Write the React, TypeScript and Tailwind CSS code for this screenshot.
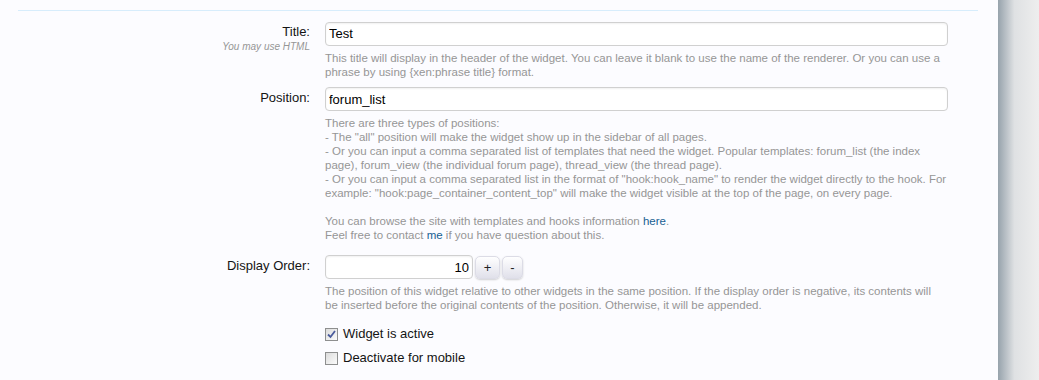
import { useState } from 'react';

const font = { fontFamily: '"Liberation Sans", Arial, sans-serif' };

function Hint({ children, className = '' }: { children: React.ReactNode; className?: string }) {
  return <div className={'text-[11.5px] leading-[14px] text-[#969696] mt-[5px] ' + className}>{children}</div>;
}

function Row({ label, sub, children }: { label: string; sub?: string; children: React.ReactNode }) {
  return (
    <div className="flex">
      <div className="w-[310px] shrink-0 text-right pt-[3px]">
        <div className="text-[13px] leading-[16px] text-[#141414]">{label}</div>
        {sub && <div className="text-[10px] italic text-[#969696] leading-[13px]">{sub}</div>}
      </div>
      <div className="ml-[15px] w-[623px]">{children}</div>
    </div>
  );
}

const inputCls =
  'h-[24px] border border-[#d0d0d0] rounded-[4px] bg-white px-[3px] text-[13px] text-black outline-none shadow-[inset_0_1px_2px_rgba(0,0,0,0.06)]';

const btnCls =
  'h-[23px] rounded-[5px] border border-[#dcdce6] bg-gradient-to-b from-[#ffffff] to-[#e0e0ea] text-[13px] leading-none text-[#222] shadow-[0_1px_2px_rgba(0,0,0,0.18)]';

function Check({ checked, onToggle, label }: { checked: boolean; onToggle: () => void; label: string }) {
  return (
    <label className="flex items-center gap-[5px] cursor-pointer" onClick={onToggle}>
      <span className="flex h-[13px] w-[13px] items-center justify-center border border-[#8e8f8f] bg-gradient-to-br from-[#dcdcdc] to-[#fbfbfb]">
        {checked && (
          <svg width="9" height="9" viewBox="0 0 9 9">
            <path d="M1 4.5 L3.5 7 L8 1" fill="none" stroke="#4a5b9c" strokeWidth="1.8" />
          </svg>
        )}
      </span>
      {label}
    </label>
  );
}

export default function App() {
  const [order, setOrder] = useState(10);
  const [active, setActive] = useState(true);
  const [mobile, setMobile] = useState(false);
  return (
    <div className="flex h-[380px] w-[1039px] overflow-hidden bg-[#eeeeee]" style={font}>
      <div className="w-[998px] bg-[#fcfcff] pt-[10px]">
        <div className="ml-[18px] w-[960px] border-t border-[#d7edfc]" />
        <div className="flex flex-col pt-[10px]">
          <Row label="Title:" sub="You may use HTML">
            <input className={inputCls + ' w-full'} defaultValue="Test" />
            <Hint>
              This title will display in the header of the widget. You can leave it blank to use the name of the renderer. Or you can use a phrase by using {'{xen:phrase title}'} format.
            </Hint>
          </Row>
          <div className="h-[8px]" />
          <Row label="Position:">
            <input className={inputCls + ' w-full'} defaultValue="forum_list" />
            <Hint>
              There are three types of positions:
              <br />- The "all" position will make the widget show up in the sidebar of all pages.
              <br />- Or you can input a comma separated list of templates that need the widget. Popular templates: forum_list (the index page), forum_view (the individual forum page), thread_view (the thread page).
              <br />- Or you can input a comma separated list in the format of "hook:hook_name" to render the widget directly to the hook. For example: "hook:page_container_content_top" will make the widget visible at the top of the page, on every page.
              <br />
              <br />
              You can browse the site with templates and hooks information <a className="text-[#176093]">here</a>.
              <br />
              Feel free to contact <a className="text-[#176093]">me</a> if you have question about this.
            </Hint>
          </Row>
          <div className="h-[13px]" />
          <Row label="Display Order:">
            <div className="flex items-center gap-[2px]">
              <input
                className={inputCls + ' w-[148px] text-right'}
                value={order}
                onChange={(e) => setOrder(Number(e.target.value) || 0)}
              />
              <button onClick={() => setOrder(order + 1)} className={btnCls + ' w-[25px]'}>
                +
              </button>
              <button onClick={() => setOrder(order - 1)} className={btnCls + ' w-[21px]'}>
                -
              </button>
            </div>
            <Hint className="w-[612px]">
              The position of this widget relative to other widgets in the same position. If the display order is negative, its contents will be inserted before the original contents of the position. Otherwise, it will be appended.
            </Hint>
            <div className="mt-[14px] flex flex-col gap-[8px] text-[13px] leading-[16px] text-[#141414]">
              <Check checked={active} onToggle={() => setActive(!active)} label="Widget is active" />
              <Check checked={mobile} onToggle={() => setMobile(!mobile)} label="Deactivate for mobile" />
            </div>
          </Row>
        </div>
      </div>
      <div className="w-[41px] bg-gradient-to-r from-[#97a3ac] via-[#dfe1e3] via-40% to-[#eeeeee]" />
    </div>
  );
}
